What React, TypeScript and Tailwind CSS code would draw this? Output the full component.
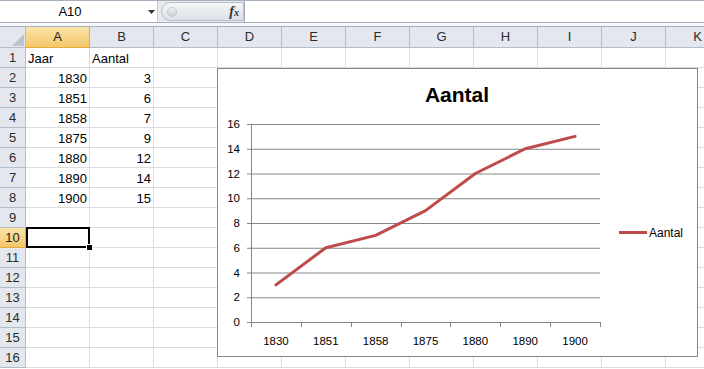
import React from "react";

const cols = ["A", "B", "C", "D", "E", "F", "G", "H", "I", "J", "K"];

// rows of sheet data: [col A, col B]
const data: Record<number, [string, string]> = {
  1: ["Jaar", "Aantal"],
  2: ["1830", "3"],
  3: ["1851", "6"],
  4: ["1858", "7"],
  5: ["1875", "9"],
  6: ["1880", "12"],
  7: ["1890", "14"],
  8: ["1900", "15"],
};

const points = [
  { year: "1830", v: 3 },
  { year: "1851", v: 6 },
  { year: "1858", v: 7 },
  { year: "1875", v: 9 },
  { year: "1880", v: 12 },
  { year: "1890", v: 14 },
  { year: "1900", v: 15 },
];

const Chart = () => {
  const x0 = 34;
  const x1 = 383;
  const yTop = 56;
  const yBottom = 254;
  const step = (x1 - x0) / points.length;
  const yOf = (v: number) => yBottom - (v / 16) * (yBottom - yTop);
  const line = points
    .map((p, i) => `${x0 + (i + 0.5) * step},${yOf(p.v)}`)
    .join(" ");

  return (
    <div className="absolute z-20 left-[217px] top-[68px] w-[481px] h-[289px] border border-[#868686] bg-white">
      <svg
        width={479}
        height={287}
        viewBox="1 1 479 287"
        style={{ fontFamily: "'Liberation Sans', Arial, sans-serif" }}
      >
        <text x={240} y={34} textAnchor="middle" fontSize={21} fontWeight="bold" fill="#000">
          Aantal
        </text>

        {/* gridlines + y labels */}
        {[0, 2, 4, 6, 8, 10, 12, 14, 16].map((v) => (
          <g key={v}>
            <line x1={30} x2={x1} y1={yOf(v) + 0.5} y2={yOf(v) + 0.5} stroke="#868686" strokeWidth={1} />
            <text x={23} y={yOf(v) + 4} textAnchor="end" fontSize={11.5} fill="#000">
              {v}
            </text>
          </g>
        ))}

        {/* y axis */}
        <line x1={x0 + 0.5} x2={x0 + 0.5} y1={yTop} y2={yBottom} stroke="#868686" strokeWidth={1} />

        {/* x ticks */}
        {Array.from({ length: points.length + 1 }).map((_, i) => (
          <line
            key={i}
            x1={Math.round(x0 + i * step) + 0.5}
            x2={Math.round(x0 + i * step) + 0.5}
            y1={yBottom}
            y2={yBottom + 5}
            stroke="#868686"
            strokeWidth={1}
          />
        ))}

        {points.map((p, i) => (
          <text key={p.year} x={x0 + (i + 0.5) * step} y={277} textAnchor="middle" fontSize={11.5} fill="#000">
            {p.year}
          </text>
        ))}

        <polyline
          points={line}
          fill="none"
          stroke="#BE4B48"
          strokeWidth={3}
          strokeLinejoin="round"
          strokeLinecap="round"
        />

        {/* legend */}
        <line x1={402} x2={430} y1={164.5} y2={164.5} stroke="#BE4B48" strokeWidth={3} />
        <text x={432} y={169} fontSize={12} fill="#000">
          Aantal
        </text>
      </svg>
    </div>
  );
};

export default function App() {
  const rows = Array.from({ length: 16 }, (_, i) => i + 1);

  return (
    <div className="relative w-[704px] h-[369px] overflow-hidden bg-white font-['Liberation_Sans',Arial,sans-serif] text-[13px] text-black">
      {/* formula bar */}
      <div className="flex h-[23px] border-t border-b border-[#a7b0bc] bg-[#e6eaef]">
        <div className="relative w-[157px] bg-white flex items-center">
          <span className="w-[140px] text-center text-[13px] text-black">A10</span>
          <svg className="absolute left-[148px] top-[9px]" width={7} height={4} viewBox="0 0 7 4">
            <path d="M0 0 H7 L3.5 4 Z" fill="#333" />
          </svg>
        </div>
        <div className="flex-1 flex items-center max-w-[87px] pl-[3px] border-l border-[#c5ccd5]">
          <div className="flex items-center h-[19px] w-[83px] rounded-l-full border border-[#b9c0ca] bg-gradient-to-b from-[#f3f5f7] to-[#dde1e6] pl-[5px]">
            <div className="w-[10px] h-[10px] rounded-full bg-gradient-to-b from-[#f4f5f7] to-[#c9cdd3] border border-[#c3c8cf]" />
            <span className="ml-auto mr-[4px] font-['Liberation_Serif',serif] italic font-bold text-[14px] text-[#333] leading-none">
              f<span className="text-[10px]">x</span>
            </span>
          </div>
        </div>
        <div className="flex-1 bg-white border-l border-[#a7b0bc]" />
      </div>
      <div className="h-[4px] bg-[#f4f6f8] border-b border-[#a7b0bc]" />

      {/* sheet */}
      <div className="flex flex-col">
        <div className="flex h-[21px]">
          <div className="relative w-[26px] shrink-0 bg-[#e4e8ee] border-r border-b border-[#b5bdc8]">
            <svg className="absolute right-[1px] bottom-[1px]" width={12} height={12} viewBox="0 0 12 12">
              <path d="M12 0 V12 H0 Z" fill="#bcc3cc" />
            </svg>
          </div>
          {cols.map((c) => (
            <div
              key={c}
              className={
                c === "A"
                  ? "w-[64px] shrink-0 flex items-center justify-center bg-gradient-to-b from-[#fbe3a6] to-[#f3c76a] border-r border-b border-[#e9a93b] text-[#222]"
                  : "w-[64px] shrink-0 flex items-center justify-center bg-[#e4e8ee] border-r border-b border-[#b5bdc8] text-[#2b2b2b]"
              }
            >
              {c}
            </div>
          ))}
        </div>

        {rows.map((r) => (
          <div key={r} className="flex h-[20px]">
            <div
              className={
                r === 10
                  ? "w-[26px] shrink-0 flex items-center justify-center pt-[1px] bg-gradient-to-b from-[#fbe3a6] to-[#f3c76a] border-r border-b border-[#e9a93b] text-[#222]"
                  : "w-[26px] shrink-0 flex items-center justify-center pt-[1px] bg-[#e4e8ee] border-r border-b border-[#b5bdc8] text-[#2b2b2b]"
              }
            >
              {r}
            </div>
            {cols.map((c, ci) => {
              const val = ci < 2 && data[r] ? data[r][ci] : "";
              const right = r > 1;
              return (
                <div
                  key={c}
                  className={
                    "relative w-[64px] shrink-0 flex items-center pt-[2px] px-[2px] border-r border-b border-[#dadcdd] " +
                    (right ? "justify-end" : "justify-start")
                  }
                >
                  {val}
                  {r === 10 && c === "A" && (
                    <div className="absolute z-10 left-0 top-[-1px] w-[64px] h-[21px] border-2 border-black">
                      <div className="absolute right-[-5px] bottom-[-5px] w-[7px] h-[7px] bg-black border border-white" />
                    </div>
                  )}
                </div>
              );
            })}
          </div>
        ))}
      </div>

      <Chart />
    </div>
  );
}
